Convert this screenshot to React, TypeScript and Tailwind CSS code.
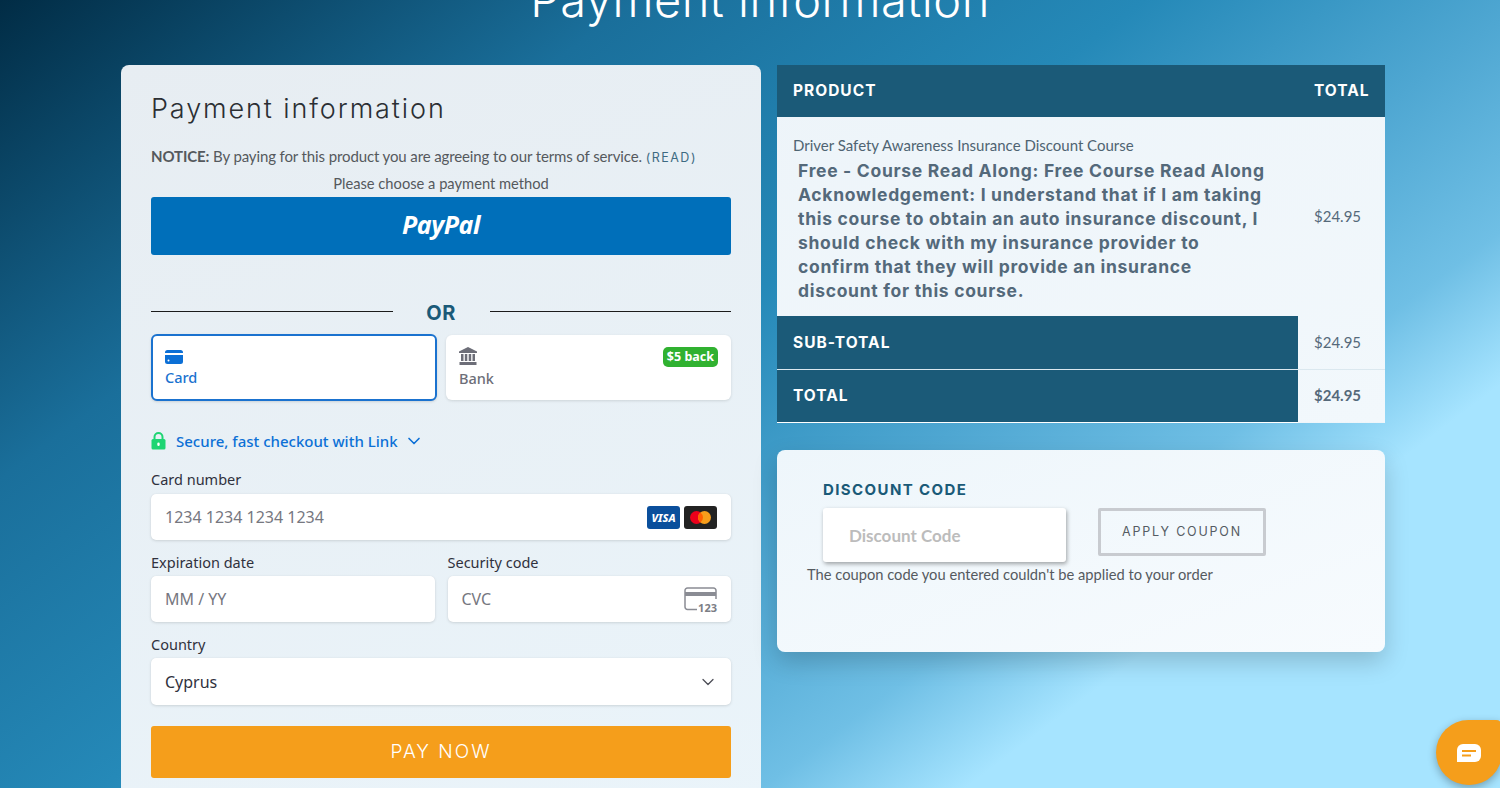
import { ChevronDown } from "lucide-react";

const lato = "font-['Lato','Liberation_Sans',sans-serif]";
const head = "font-['Inter','Liberation_Sans',sans-serif]";
const stripe = "font-['Noto_Sans','Open_Sans',sans-serif]";
const fieldBox = "flex items-center bg-white rounded-[5px] shadow-[0_1px_3px_rgba(0,0,0,0.12),0_0_1px_rgba(0,0,0,0.08)] px-3.5";

const CardIcon = () => (
  <svg width="18" height="14" viewBox="0 0 18 14">
    <path fill="#0b6fd6" d="M0 2.5A2.5 2.5 0 0 1 2.5 0h13A2.5 2.5 0 0 1 18 2.5V3H0zM0 5h18v6.5a2.5 2.5 0 0 1-2.5 2.5h-13A2.5 2.5 0 0 1 0 11.500z" />
    <rect x="2.500" y="9.500" width="2" height="2" rx="1" fill="#fff" />
  </svg>
);

const BankIcon = () => (
  <svg width="18" height="18" viewBox="0 0 18 18" fill="#6d6e78">
    <path d="M9 0l9 4.500V6H0V4.500z" />
    <rect x="2" y="7" width="2.500" height="7" />
    <rect x="5.800" y="7" width="2.500" height="7" />
    <rect x="9.700" y="7" width="2.500" height="7" />
    <rect x="13.500" y="7" width="2.500" height="7" />
    <rect x="0.500" y="15" width="17" height="3" />
  </svg>
);

const LockIcon = () => (
  <svg width="15" height="18" viewBox="0 0 15 18">
    <path fill="none" stroke="#1ed573" strokeWidth="2" d="M3.500 8V5a4 4 0 0 1 8 0v3" />
    <rect x="0.500" y="7" width="14" height="10.500" rx="1.500" fill="#1ed573" />
    <rect x="6.300" y="10.500" width="2.400" height="3.500" rx="1.200" fill="#fff" />
  </svg>
);

const VisaBadge = () => (
  <div className="flex items-center justify-center w-[33px] h-[23px] rounded-[3px] bg-[#0a4f9c]">
    <span className={`${stripe} text-white text-[11px] font-extrabold italic leading-none`}>VISA</span>
  </div>
);

const MastercardBadge = () => (
  <svg width="33" height="23" viewBox="0 0 33 23">
    <rect width="33" height="23" rx="3" fill="#222" />
    <circle cx="12.500" cy="11.500" r="6.500" fill="#eb001b" />
    <circle cx="20.500" cy="11.500" r="6.500" fill="#f79e1b" />
    <path d="M16.500 6.400a6.500 6.500 0 0 1 0 10.200a6.500 6.500 0 0 1 0-10.200z" fill="#ff5f00" />
  </svg>
);

const CvcIcon = () => (
  <div className="relative w-[33px] h-[24px]">
    <svg width="33" height="24" viewBox="0 0 33 24" fill="none">
      <path stroke="#8a8c94" strokeWidth="1.500" d="M13 22.500H3.500a2.500 2.500 0 0 1-2.500-2.500V3.500A2.500 2.500 0 0 1 3.500 1h26A2.500 2.500 0 0 1 32 3.500V12" />
      <rect x="1" y="5" width="31" height="4" fill="#8a8c94" />
    </svg>
    <span className={`${stripe} absolute right-0 bottom-[-2px] text-[11px] font-bold leading-none text-[#7c7e86]`}>123</span>
  </div>
);

const Label = ({ children }: { children: string }) => (
  <div className={`${stripe} text-[14.500px] leading-5 text-[#30313d]`}>{children}</div>
);

const App = () => {
  return (
    <div className={`${lato} relative h-[788px] overflow-hidden bg-[linear-gradient(143deg,#012c45_0%,#1a6f9b_25%,#2589b8_45%,#4fa7d2_60%,#6fbfe5_71%,#a6e4ff_79%)]`}>
      {/* Page title, scrolled partly out of view */}
      <h1 className={`${head} -mt-[28px] h-[93px] pl-5 text-center text-[47px] leading-[56px] font-light tracking-[0.5px] text-white`}>
        Payment information
      </h1>

      <div className="flex items-start pl-[121px] gap-4">
        {/* Payment form */}
        <div className="w-[640px] h-[760px] shrink-0 rounded-lg bg-[linear-gradient(160deg,#e7edf2,#eaf4fa)] px-[30px] pt-7">
          <h2 className={`${head} text-[27px] leading-8 font-light tracking-[1.900px] text-[#2b2f33]`}>Payment information</h2>

          <p className="mt-[21px] text-[15px] leading-5 tracking-[-0.120px] text-[#55595d] whitespace-nowrap">
            <b className="font-bold">NOTICE:</b> By paying for this product you are agreeing to our terms of service.{" "}
            <span className={`${head} text-[12.500px] tracking-[1.500px] text-[#3d6a82]`}>(READ)</span>
          </p>
          <p className="mt-[5px] text-center text-[14.700px] leading-5 text-[#55595d]">Please choose a payment method</p>

          <button className="mt-[4px] flex h-[58px] w-full items-center justify-center rounded-[3px] bg-[#006fba] pb-1">
            <span className={`${stripe} text-[25px] font-bold italic leading-none tracking-[-0.4px] text-white`}>PayPal</span>
          </button>

          <div className="mt-[46px] flex items-start">
            <div className="mt-[10px] h-px flex-1 bg-[#1b1b1b]" />
            <span className={`${head} w-[97px] text-center text-[20px] leading-6 font-bold tracking-[0.6px] text-[#1a5a78]`}>OR</span>
            <div className="mt-[10px] h-px flex-1 bg-[#1b1b1b]" />
          </div>

          <div className={`${stripe} mt-[9px] flex items-center gap-[9px]`}>
            <div className="h-[67px] w-[286px] rounded-md border-2 border-[#1a72cf] bg-white pl-3 pt-[14px] shadow-sm">
              <CardIcon />
              <div className="mt-[3px] text-[14.500px] leading-5 font-medium text-[#1a72cf]">Card</div>
            </div>
            <div className="relative h-[65px] w-[285px] rounded-md bg-white pl-[13px] pt-3 shadow-[0_1px_3px_rgba(0,0,0,0.12)]">
              <BankIcon />
              <div className="mt-[3px] text-[14.500px] leading-5 font-medium text-[#6d6e78]">Bank</div>
              <span className="absolute right-[13px] top-[12px] flex h-5 items-center rounded-[5px] bg-[#30b130] px-1 text-[12.500px] font-bold text-white">
                $5 back
              </span>
            </div>
          </div>

          <div className={`${stripe} mt-[30px] flex items-center h-5 text-[#0d70d6]`}>
            <LockIcon />
            <span className="ml-[10px] text-[15px] font-medium">Secure, fast checkout with Link</span>
            <ChevronDown className="ml-[6px] h-[20px] w-[20px]" strokeWidth={2} />
          </div>

          <div className="mt-[18px]"><Label>Card number</Label></div>
          <div className={`${fieldBox} ${stripe} mt-[5px] h-[46px] justify-between text-[16px] text-[#76777f]`}>
            <span>1234 1234 1234 1234</span>
            <div className="flex gap-[4px]">
              <VisaBadge />
              <MastercardBadge />
            </div>
          </div>

          <div className="mt-[12px] grid grid-cols-2 gap-x-[13px]">
            <div>
              <Label>Expiration date</Label>
              <div className={`${fieldBox} ${stripe} mt-[4px] h-[46px] text-[16px] text-[#76777f]`}>MM / YY</div>
            </div>
            <div>
              <Label>Security code</Label>
              <div className={`${fieldBox} ${stripe} mt-[4px] h-[46px] justify-between text-[16px] text-[#76777f]`}>
                <span>CVC</span>
                <CvcIcon />
              </div>
            </div>
          </div>

          <div className="mt-[12px]"><Label>Country</Label></div>
          <div className={`${fieldBox} ${stripe} mt-[4px] h-[47px] justify-between text-[16px] text-[#30313d]`}>
            <span>Cyprus</span>
            <ChevronDown className="h-5 w-5 -mr-[1px] text-[#4d4e57]" strokeWidth={1.500} />
          </div>

          <button className={`${head} mt-[21px] h-[52px] w-full rounded-[3px] bg-[#f59e1b] text-[19px] font-light tracking-[2px] text-white`}>
            PAY NOW
          </button>
        </div>

        {/* Order summary and coupon */}
        <div className="w-[608px] shrink-0">
          <table className="w-full table-fixed border-collapse bg-[linear-gradient(160deg,#edf4f9,#f2f8fc)]">
            <thead>
              <tr className={`${head} h-[52px] bg-[#1b5a78] text-left text-[15.500px] font-bold tracking-[1px] text-white`}>
                <th className="pl-4 font-bold">PRODUCT</th>
                <th className="w-[87px] pl-4 font-bold whitespace-nowrap">TOTAL</th>
              </tr>
            </thead>
            <tbody>
              <tr className="h-[199px]">
                <td className="pl-4 pr-[30px] align-top">
                  <div className="mt-[18px] text-[15px] leading-5 text-[#4f6472]">Driver Safety Awareness Insurance Discount Course</div>
                  <div className={`${head} mt-[4px] ml-[5px] text-[17.500px] leading-6 font-bold tracking-[0.700px] text-[#54697a]`}>
                    Free - Course Read Along: Free Course Read Along Acknowledgement: I understand that if I am taking this course to obtain an auto insurance discount, I should check with my insurance provider to confirm that they will provide an insurance discount for this course.
                  </div>
                </td>
                <td className="pl-4 text-[15px] text-[#55697a]">$24.95</td>
              </tr>
              <tr className="h-[53px]">
                <td className={`${head} bg-[#1b5a78] pl-4 text-[15.500px] font-bold tracking-[1px] text-white`}>SUB-TOTAL</td>
                <td className="pl-4 text-[15px] text-[#55697a]">$24.95</td>
              </tr>
              <tr className="h-[53px] border-t border-[#dbe8ef]">
                <td className={`${head} border-b border-white bg-[#1b5a78] pl-4 text-[15.500px] font-bold tracking-[1px] text-white`}>TOTAL</td>
                <td className="pl-4 pb-[2px] text-[15px] font-bold text-[#55697a]">$24.95</td>
              </tr>
            </tbody>
          </table>

          <div className="mt-[27px] h-[202px] rounded-lg bg-[linear-gradient(160deg,#eef6fb,#f7fbfe)] pl-[30px] pt-[31px] shadow-[0_10px_25px_rgba(0,0,0,0.18)]">
            <div className={`${head} ml-4 text-[15px] leading-[18px] font-bold tracking-[1.400px] text-[#1a5a78]`}>DISCOUNT CODE</div>
            <div className="ml-4 mt-[9px] flex items-start gap-8">
              <div className="flex h-[54px] w-[243px] items-center rounded-[3px] bg-white pl-[26px] pt-[2px] text-[17px] font-bold text-[#bcbcbc] shadow-[1px_2px_4px_rgba(0,0,0,0.35)]">
                Discount Code
              </div>
              <button className={`${head} h-[48px] w-[168px] rounded-[2px] border-[3px] border-[#c8cbd0] pt-[1px] text-[12.500px] tracking-[1.800px] text-[#555c63]`}>
                APPLY COUPON
              </button>
            </div>
            <p className="mt-[2px] text-[14.700px] leading-5 text-[#555a60]">The coupon code you entered couldn't be applied to your order</p>
          </div>
        </div>
      </div>

      {/* Chat launcher */}
      <div className="absolute left-[1436px] top-[720px] flex h-[65px] w-[66px] items-center justify-center rounded-[33px_6px_33px_33px] bg-[#f59e1b] shadow-[0_3px_8px_rgba(0,0,0,0.3)]">
        <svg width="24" height="18" viewBox="0 0 24 18">
          <path fill="#fff" d="M6 0h12a6 6 0 0 1 6 6v6a6 6 0 0 1-6 6H0V6a6 6 0 0 1 6-6z" />
          <rect x="5" y="6" width="14" height="2" fill="#f59e1b" />
          <rect x="5" y="10.500" width="9" height="2" fill="#f59e1b" />
        </svg>
      </div>
    </div>
  );
};

export default App;
